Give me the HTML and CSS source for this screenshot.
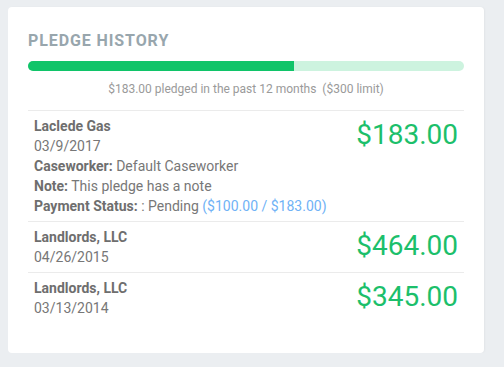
FILE: index.html
```html
<!DOCTYPE html>
<html lang="en">

<head>
  <meta charset="UTF-8">
  <meta name="viewport" content="width=device-width, initial-scale=1.0">
  <link rel="stylesheet" href="styles.css">
  <title>Pledge History</title>
</head>

<body>
  <div class="card-box">
    <h4 class="header-title">Pledge History</h4>

    <div class="progress">
      <div class="progress-bar" style="width: 61%;"></div>
    </div>
    <p class="limit-text">$183.00 pledged in the past 12 months &nbsp;($300 limit)</p>

    <div class="pledge-list">
      <div class="pledge">
        <div class="pledge-info">
          <div class="vendor">Laclede Gas</div>
          <div>03/9/2017</div>
          <div><b>Caseworker:</b> Default Caseworker</div>
          <div><b>Note:</b> This pledge has a note</div>
          <div><b>Payment Status:</b> : Pending <span class="paid">($100.00 / $183.00)</span></div>
        </div>
        <div class="amount">$183.00</div>
      </div>

      <div class="pledge">
        <div class="pledge-info">
          <div class="vendor">Landlords, LLC</div>
          <div>04/26/2015</div>
        </div>
        <div class="amount">$464.00</div>
      </div>

      <div class="pledge">
        <div class="pledge-info">
          <div class="vendor">Landlords, LLC</div>
          <div>03/13/2014</div>
        </div>
        <div class="amount">$345.00</div>
      </div>
    </div>
  </div>
</body>

</html>
```

FILE: styles.css
```css
body {
  margin: 0;
  padding: 7px 20px 0 8px;
  background-color: #ebeef1;
  font-family: 'Roboto', 'Liberation Sans', sans-serif;
  font-size: 14px;
  line-height: 20px;
  color: #777;
}

.card-box {
  background-color: #fff;
  border-radius: 4px;
  padding: 24px 20px 30px 20px;
  height: 346px;
  box-sizing: border-box;
  box-shadow: 1px 0 2px rgba(0, 0, 0, 0.04);
}

.header-title {
  margin: 0 0 10px 0;
  font-size: 16px;
  line-height: 20px;
  font-weight: bold;
  text-transform: uppercase;
  letter-spacing: 0.9px;
  color: #98a6ad;
}

.progress {
  height: 10px;
  border-radius: 5px;
  background-color: #cdf3df;
  overflow: hidden;
}

.progress-bar {
  height: 100%;
  background-color: #10c469;
}

.limit-text {
  margin: 10px 0 12px 0;
  font-size: 12px;
  line-height: 17px;
  text-align: center;
  color: #9a9a9a;
}

.pledge {
  display: flex;
  justify-content: space-between;
  align-items: flex-start;
  padding: 5px 6px;
  border-top: 1px solid #ebebeb;
}

.vendor,
.pledge-info b {
  font-weight: bold;
  color: #6e6e6e;
}

.paid {
  color: #6fb2f6;
}

.amount {
  font-size: 28px;
  line-height: 38px;
  color: #1cbf6b;
}
```
